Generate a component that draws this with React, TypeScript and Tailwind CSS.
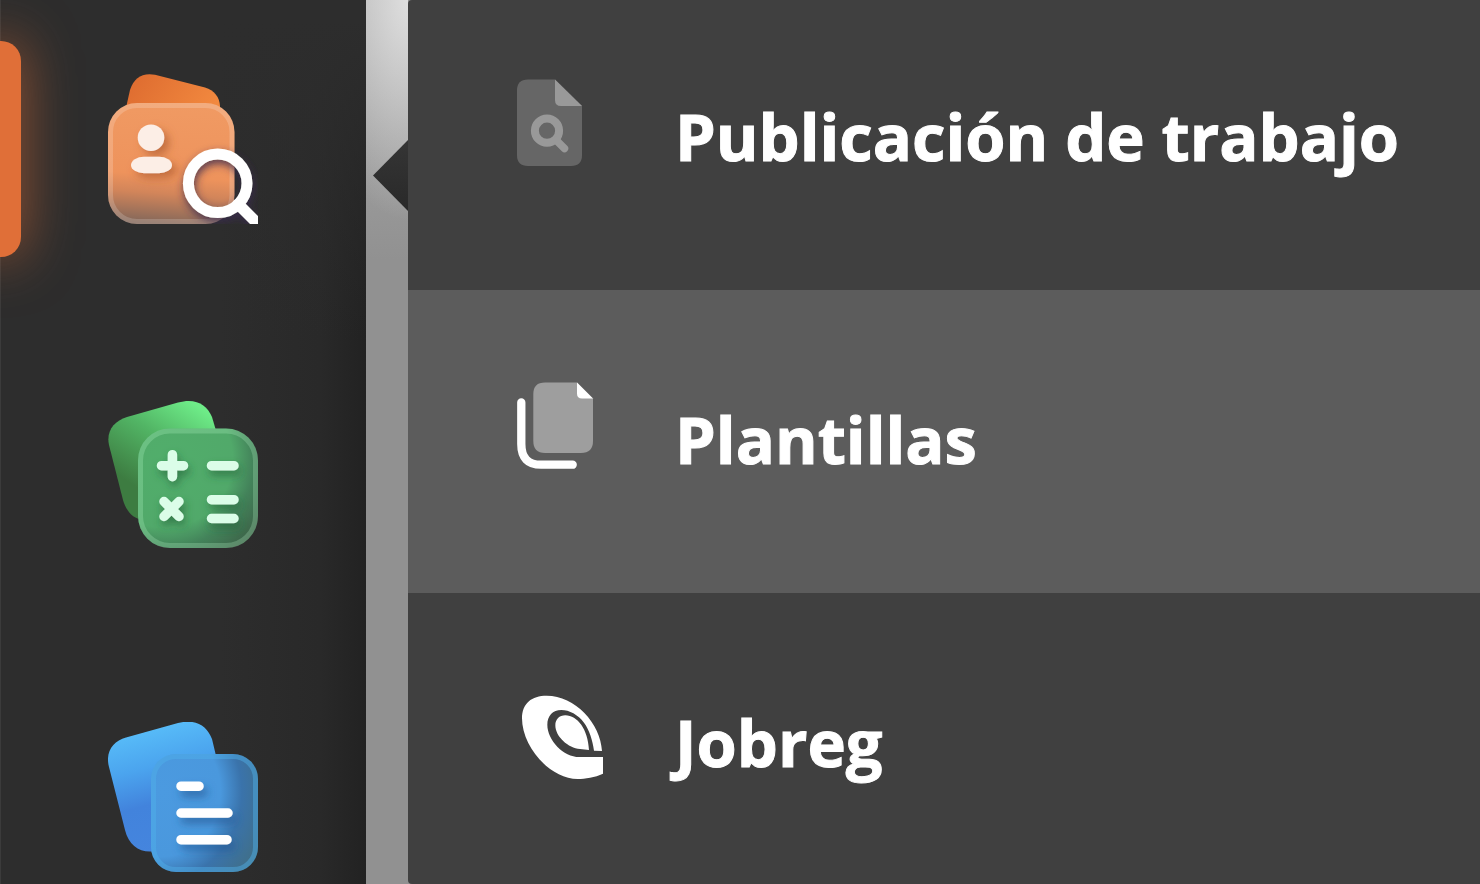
import React from "react";

function RecruitIcon() {
  return (
    <svg viewBox="0 0 150 150" className="size-[150px]" aria-hidden="true">
      <defs>
        <linearGradient id="r-back" x1="0" y1="0.3" x2="1" y2="0.6">
          <stop offset="0" stopColor="#de6c30" />
          <stop offset="1" stopColor="#f2893f" />
        </linearGradient>
        <linearGradient id="r-front" x1="0.5" y1="0" x2="0.42" y2="1">
          <stop offset="0" stopColor="#f09a63" />
          <stop offset="0.6" stopColor="#ee935c" />
          <stop offset="0.75" stopColor="#d2855a" />
          <stop offset="1" stopColor="#83675a" />
        </linearGradient>
        <filter id="r-drop" x="-50%" y="-50%" width="200%" height="200%">
          <feDropShadow dx="5" dy="5" stdDeviation="4" floodColor="#a5572a" floodOpacity="0.6" />
        </filter>
        <filter id="r-lens" x="-50%" y="-50%" width="200%" height="200%">
          <feDropShadow dx="1" dy="4" stdDeviation="4" floodColor="#392c50" floodOpacity="0.85" />
        </filter>
      </defs>
      <path d="M17.5 36 L22 16 Q28 -2.500 47 0.800 L97 13.500 Q111 18 112 32 V42 H17Z" fill="url(#r-back)" />
      <rect x="0" y="29" width="126.500" height="121" rx="29" fill="url(#r-front)" />
      <rect x="2.500" y="31.500" width="121.500" height="116" rx="26.500" fill="none" stroke="#fff" strokeOpacity="0.18" strokeWidth="5" />
      <g fill="#fceee6" filter="url(#r-drop)">
        <circle cx="43" cy="63.700" r="13.300" />
        <rect x="23" y="82.700" width="41" height="16.600" rx="13" ry="8.300" />
      </g>
      <g fill="none" stroke="#fff" strokeWidth="11" filter="url(#r-lens)">
        <circle cx="109.700" cy="109.300" r="29.300" />
        <path d="M130 130 L149 149" strokeLinecap="round" />
      </g>
    </svg>
  );
}

function CalculatorIcon() {
  return (
    <svg viewBox="0 0 150 150" className="size-[150px]" aria-hidden="true">
      <defs>
        <linearGradient id="c-back" x1="0.75" y1="0" x2="0.3" y2="0.75">
          <stop offset="0" stopColor="#6eec88" />
          <stop offset="0.45" stopColor="#52b565" />
          <stop offset="1" stopColor="#3d7c41" />
        </linearGradient>
        <radialGradient id="c-front" cx="0.22" cy="0.26" r="0.95">
          <stop offset="0" stopColor="#51ae6b" />
          <stop offset="0.6" stopColor="#51a96a" />
          <stop offset="0.78" stopColor="#43835a" />
          <stop offset="1" stopColor="#3d6449" />
        </radialGradient>
        <filter id="c-drop" x="-50%" y="-50%" width="200%" height="200%">
          <feDropShadow dx="2" dy="5" stdDeviation="4" floodColor="#25653a" floodOpacity="0.65" />
        </filter>
      </defs>
      <path d="M19 19 L70 4.500 C88 -0.500 99 7 104 19 L109 36 V80 L36 122 C24 121 18 112 15 102 L1 47 C-2 33 6 23 19 19Z" fill="url(#c-back)" />
      <rect x="30" y="30.500" width="120" height="119.500" rx="32" fill="url(#c-front)" />
      <rect x="32.500" y="33" width="115" height="114.500" rx="29.500" fill="none" stroke="#bfffd0" strokeOpacity="0.24" strokeWidth="5" />
      <g fill="none" stroke="#dbfde8" strokeWidth="9.500" strokeLinecap="round" filter="url(#c-drop)">
        <path d="M53.500 67.700 H75.500 M64.400 56.700 V78.700" />
        <path d="M56 103.500 L71 118.500 M71 103.500 L56 118.500" />
        <path d="M103.500 67.700 H126 M103.500 101.700 H126 M103.500 120.500 H126" />
      </g>
    </svg>
  );
}

function DocumentsIcon() {
  return (
    <svg viewBox="0 0 150 150" className="size-[150px]" aria-hidden="true">
      <defs>
        <linearGradient id="d-back" x1="0.3" y1="0.08" x2="0.5" y2="1">
          <stop offset="0" stopColor="#57bbf8" />
          <stop offset="0.3" stopColor="#4ba4ee" />
          <stop offset="0.6" stopColor="#4283dc" />
          <stop offset="1" stopColor="#4585de" />
        </linearGradient>
        <radialGradient id="d-front" cx="0.1" cy="0.32" r="1.1">
          <stop offset="0" stopColor="#4b9ae0" />
          <stop offset="0.5" stopColor="#4a98dd" />
          <stop offset="0.68" stopColor="#3a73ab" />
          <stop offset="1" stopColor="#426e7e" />
        </radialGradient>
        <filter id="d-drop" x="-50%" y="-50%" width="200%" height="200%">
          <feDropShadow dx="4" dy="6" stdDeviation="4" floodColor="#235793" floodOpacity="0.65" />
        </filter>
      </defs>
      <path d="M18 15.500 L70 1 C88 -3.500 99 4 104 17 L109 38 V90 L48 129 C33 132 21 124 17 108 L1 45 C-3 30 5 19 18 15.500Z" fill="url(#d-back)" />
      <rect x="43" y="32" width="107" height="118" rx="25" fill="url(#d-front)" />
      <rect x="45.500" y="34.500" width="102" height="113" rx="22.500" fill="none" stroke="#4fb2ec" strokeOpacity="0.45" strokeWidth="5" />
      <path d="M73 64.200 H91 M73 91 H120 M73 117.700 H119" fill="none" stroke="#fff" strokeWidth="9.500" strokeLinecap="round" filter="url(#d-drop)" />
    </svg>
  );
}

function JobPostIcon() {
  return (
    <svg viewBox="0 0 104 120" className="h-[120px] w-[104px] shrink-0" aria-hidden="true">
      <path d="M11 0.500 H38 L65 27 V76 Q65 87 54 87 H11 Q0 87 0 76 V11.500 Q0 0.500 11 0.500Z" fill="#666" />
      <path d="M38 0.500 L65 27 H44 Q38 27 38 21Z" fill="#999" />
      <circle cx="30" cy="51.700" r="12.100" fill="none" stroke="#999" strokeWidth="8" />
      <path d="M39.500 61.500 L47.500 69.500" stroke="#999" strokeWidth="7.500" strokeLinecap="round" />
    </svg>
  );
}

function TemplatesIcon() {
  return (
    <svg viewBox="0 0 104 120" className="h-[120px] w-[104px] shrink-0" aria-hidden="true">
      <path d="M28 0.500 H60 L76 16.500 V59 Q76 71 64 71 H28 Q16.300 71 16.300 59 V12 Q16.300 0.500 28 0.500Z" fill="#9e9e9e" />
      <path d="M60 0.500 L76 16.500 H65 Q60 16.500 60 11.500Z" fill="#fff" />
      <path d="M4.300 20.500 V62 Q4.300 82.700 24 82.700 H55.700" fill="none" stroke="#fff" strokeWidth="8.300" strokeLinecap="round" />
    </svg>
  );
}

function JobregIcon() {
  return (
    <svg viewBox="51 15 312 360" className="h-[120px] w-[104px] shrink-0" fill="#fff" aria-hidden="true">
      <path d="M66 115 C66 70 95 47 140 47 C225 47 302 130 306 213 L282 212 C278 180 268 150 252 128 C234 104 208 90 184 90 C158 90 142 108 142 134 C142 180 190 231 238 231 H309 V281 C285 292 255 297 233 297 C150 297 66 200 66 115Z" />
      <path d="M166 136 C166 118 178 106 196 106 C232 106 264 148 267 210 L240 207 C205 205 166 170 166 136Z" />
    </svg>
  );
}

const sections = [
  { label: "Reclutamiento", Icon: RecruitIcon, active: true },
  { label: "Calculadora", Icon: CalculatorIcon, active: false },
  { label: "Documentos", Icon: DocumentsIcon, active: false },
];

const entries = [
  { label: "Publicación de trabajo", Icon: JobPostIcon, row: "h-[290px] pb-3" },
  { label: "Plantillas", Icon: TemplatesIcon, row: "h-[303px] bg-[#5c5c5c]" },
  { label: "Jobreg", Icon: JobregIcon, row: "h-[291px] pt-3" },
];

export default function App() {
  return (
    <div className="flex h-screen overflow-hidden bg-[#919191] font-['Open_Sans',sans-serif]">
      <nav
        aria-label="Principal"
        className="w-[366px] shrink-0 overflow-hidden bg-[#2d2d2d] bg-[linear-gradient(to_bottom,#2d2d2d_20px,rgba(45,45,45,0)_340px),linear-gradient(to_right,#2d2d2d_220px,#292929_320px,#222222_366px)] pt-[41px] shadow-[inset_1px_0_0_#3b3b3b]"
      >
        <ul className="flex flex-col gap-[108px]">
          {sections.map(({ label, Icon, active }) => (
            <li key={label} className="relative">
              {active && (
                <span className="absolute inset-y-0 -left-5 w-[41px] rounded-r-[20px] bg-[#e06f38] shadow-[0_0_54px_0_rgba(224,111,56,0.65)]" />
              )}
              <button type="button" aria-label={label} className="flex h-[216px] w-full items-center justify-center">
                <Icon />
              </button>
            </li>
          ))}
        </ul>
      </nav>

      <div className="relative w-[42px] shrink-0 bg-[radial-gradient(ellipse_100px_220px_at_100%_0,rgba(228,228,228,0.9),transparent),linear-gradient(to_bottom,#aaaaaa,#9c9c9c_160px,#919191_260px)]">
        <span className="absolute top-[140px] right-0 h-[71px] w-[35px] bg-linear-to-b from-[#353535] to-[#292929] [clip-path:polygon(100%_0,0_50%,100%_100%)]" />
      </div>

      <ul className="min-w-0 grow self-start overflow-hidden rounded-l-[4px] bg-[#404040]">
        {entries.map(({ label, Icon, row }) => (
          <li key={label} className={row}>
            <a href="#" className="flex h-full items-center gap-[54px] pl-[109px] text-[65px] leading-[92px] font-bold whitespace-nowrap text-white [-webkit-text-stroke:1px_white]">
              <Icon />
              <span className="pb-1.5">{label}</span>
            </a>
          </li>
        ))}
      </ul>
    </div>
  );
}
